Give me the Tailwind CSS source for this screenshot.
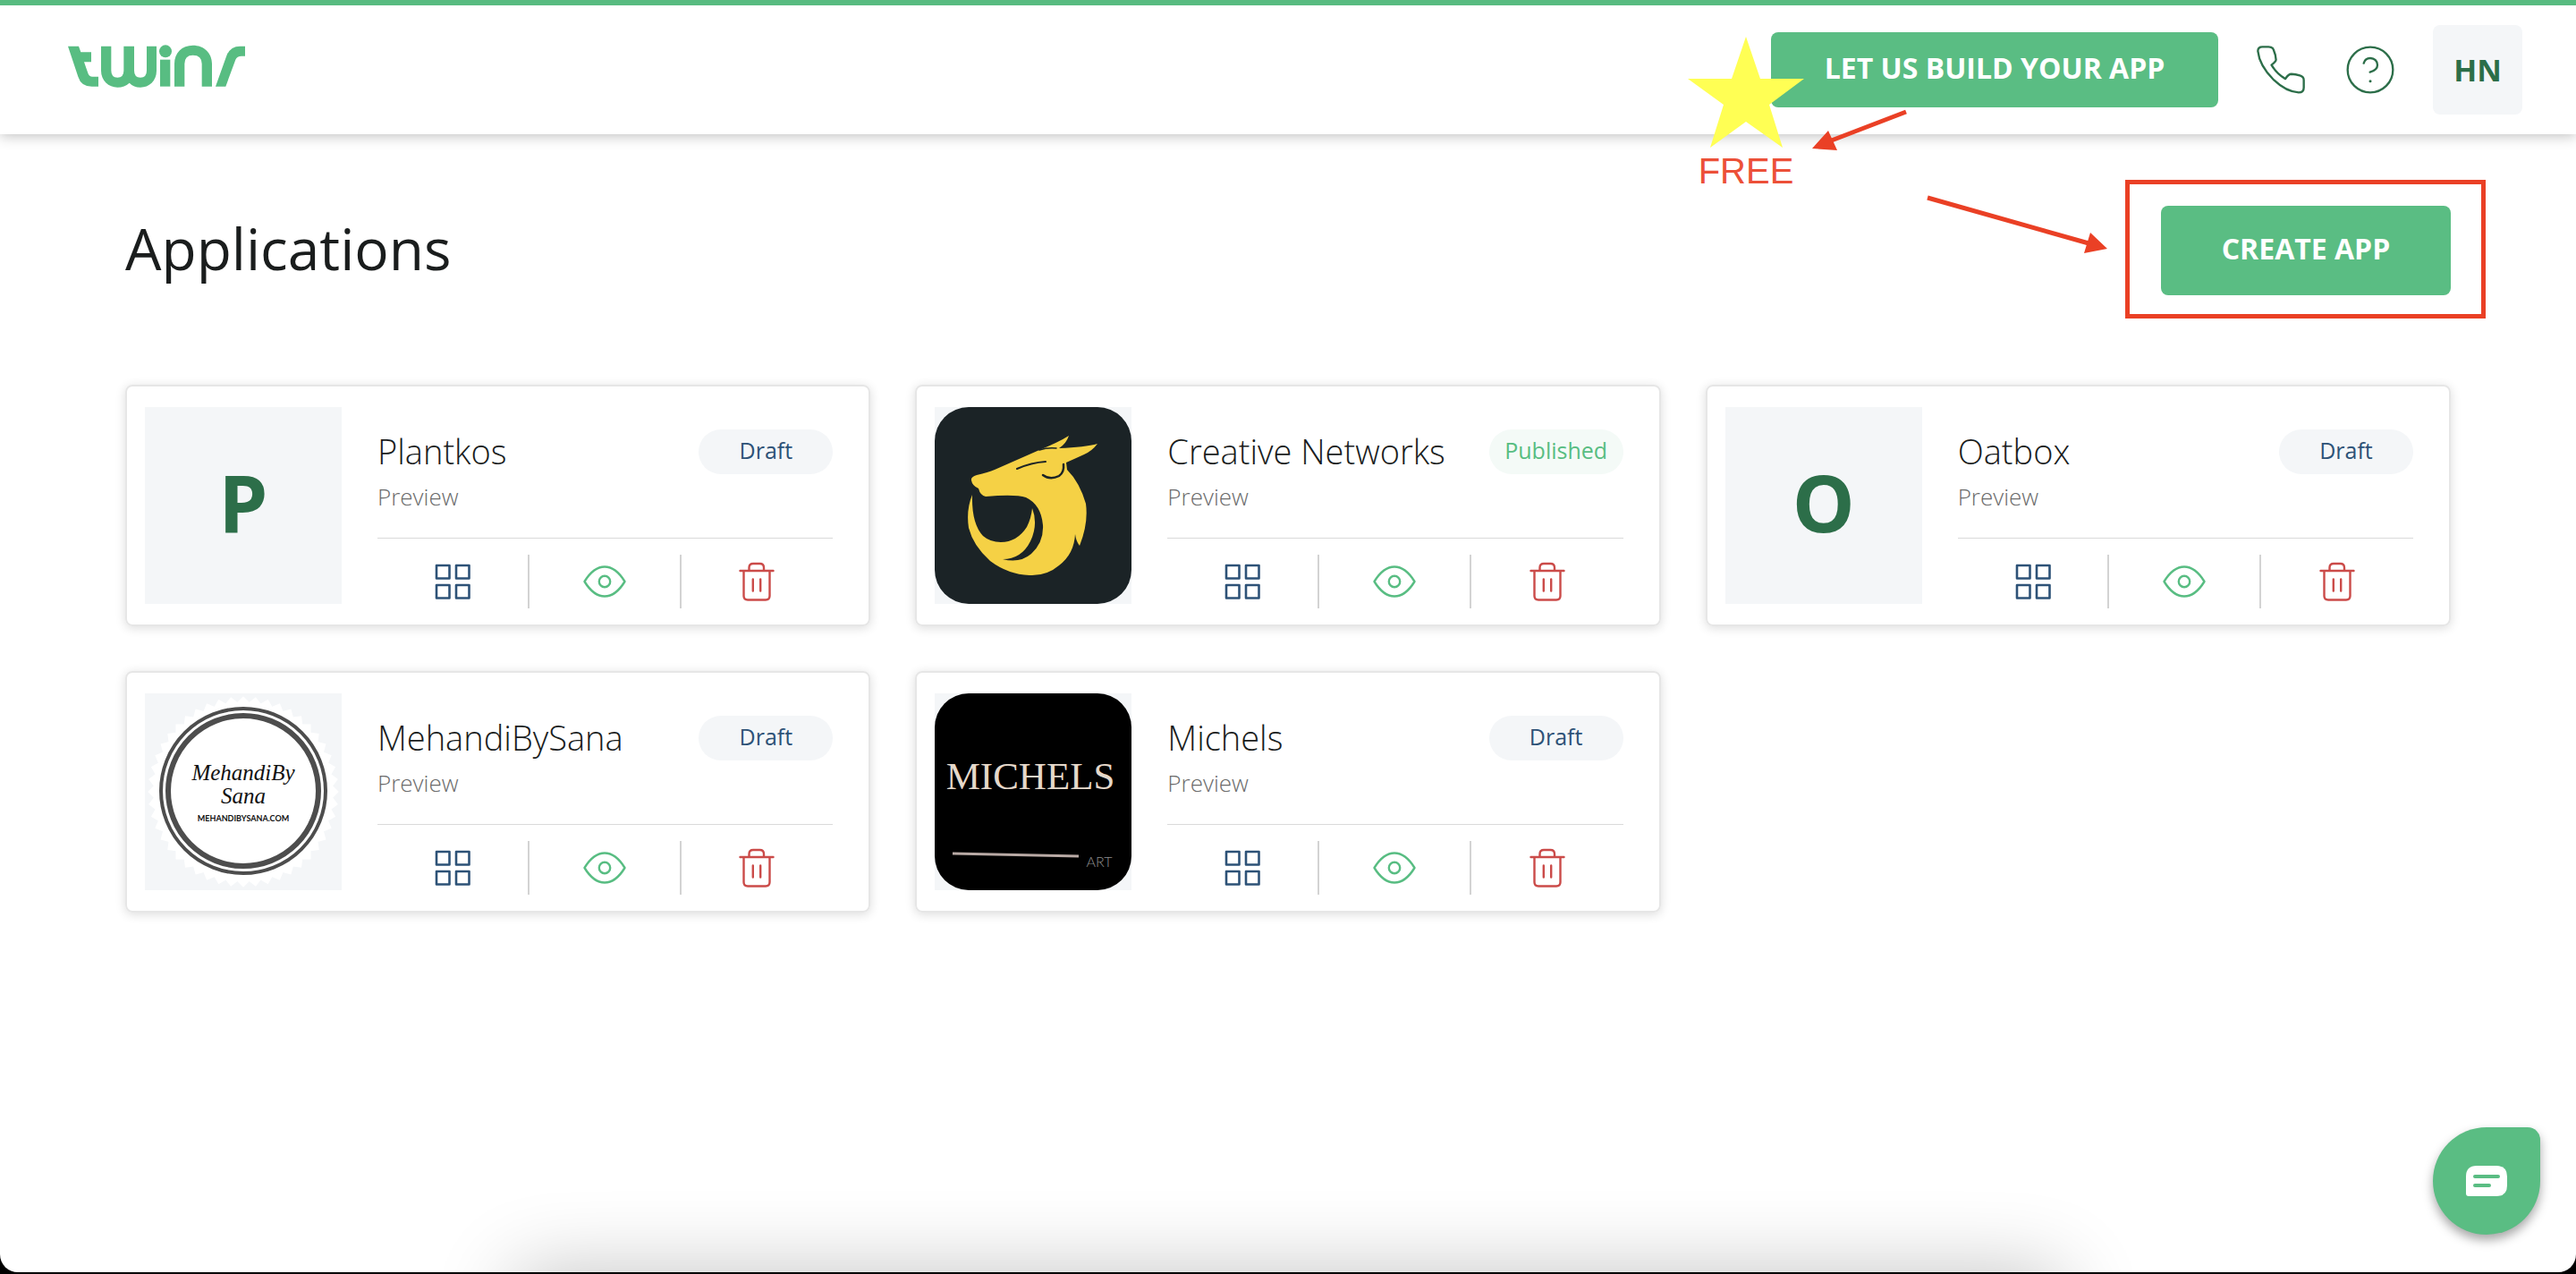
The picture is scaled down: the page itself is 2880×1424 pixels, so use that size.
<!DOCTYPE html>
<html lang="en">
<head>
<meta charset="utf-8">
<meta name="viewport" content="width=device-width, initial-scale=1">
<title>Applications</title>
<script src="https://cdn.jsdelivr.net/npm/@tailwindcss/browser@4"></script>
</head>
<body class="bg-black font-['Open_Sans',sans-serif] text-[#1a1d1d]">
<svg class="hidden" aria-hidden="true">
  <symbol id="grid" viewBox="0 0 50 50"><g fill="none" stroke="#2d5277" stroke-width="2.6" stroke-linejoin="round"><rect x="7" y="7" width="14.5" height="14.5"/><rect x="29" y="7" width="14.5" height="14.5"/><rect x="7" y="29" width="14.5" height="14.5"/><rect x="29" y="29" width="14.5" height="14.5"/></g></symbol>
  <symbol id="eye" viewBox="0 0 50 50"><g fill="none" stroke="#58bd82" stroke-width="2.4" stroke-linejoin="round"><path d="M2.5 25C8 16 16 8.500 25 8.500S42 16 47.500 25C42 34 34 41.500 25 41.500S8 34 2.500 25Z"/><circle cx="25" cy="25" r="6.200"/></g></symbol>
  <symbol id="trash" viewBox="0 0 50 50"><g fill="none" stroke="#cb4b49" stroke-width="2.4" stroke-linecap="round"><path d="M6.500 13H43.500M16.500 12.500V9.500Q16.500 5 21 5H28.500Q33 5 33 9.500V12.500M10.500 13V41Q10.500 45.500 15 45.500H35Q39.500 45.500 39.500 41V13M20.800 22.500V35.500M29.200 22.500V35.500"/></g></symbol>
</svg>

<div class="relative flex min-h-[calc(100vh-2px)] flex-col overflow-hidden rounded-b-[20px] bg-white">
  <header class="flex items-center justify-between border-t-6 border-[#58bb80] pr-[60px] pl-[76px] py-[22px] shadow-[0_2px_14px_rgba(0,0,0,0.25)]">
    <a href="#" aria-label="twinr">
      <svg class="h-[57px] w-[198px]" viewBox="48 28 594 171" fill="#58bd82">
        <path d="M48 33H84L91 53H126V86H102L115 123Q119 135 130 135H150V168H128Q92 168 82 135Z"/>
        <path d="M159 33H193V115Q193 138 214 138Q235 138 235 115V33H270V115Q270 138 291 138Q312 138 312 115V33H345V115C345 150 320 171 291 171Q268 171 254 156Q238 171 214 171C184 171 159 148 159 115Z"/>
        <circle cx="375" cy="50" r="21"/><path d="M357 78H391V168H357Z"/>
        <path d="M405 168V92C405 55 430 30 467 30S531 55 531 92V168H497V92Q497 63 467 63Q439 63 439 92V168Z"/>
        <path d="M543 168L580 65Q592 33 625 33H642V66H630Q615 66 610 78L577 168Z"/>
      </svg>
    </a>
    <div class="flex items-center gap-10">
      <button class="h-[84px] w-[500px] rounded-lg bg-[#5abd83] pb-1 text-[32px] font-bold text-white">LET US BUILD YOUR APP</button>
      <button class="flex size-[60px] items-center justify-center" aria-label="Call us">
        <svg class="size-[54px]" viewBox="71 94 160 160" fill="none" stroke="#2c6e49" stroke-width="7" stroke-linejoin="round"><path d="M75 112Q75 98 90 98H110Q124 98 127 108Q134 124 135 141Q135 147 120 158Q138 188 166 204Q176 188 186 188Q200 189 214 193Q227 197 227 208V233Q227 249 210 249Q170 248 128 208Q80 160 75 112Z"/></svg>
      </button>
      <button class="flex size-[60px] items-center justify-center" aria-label="Help">
        <svg class="size-[54px]" viewBox="369 93 162 162" fill="none" stroke="#2c6e49" stroke-width="7" stroke-linecap="round"><circle cx="450" cy="174" r="76"/><path d="M428 152C431 140 440 135 450 135C464 135 474 145 474 158C474 170 462 178 449 182"/><path d="M450 212V212.100" stroke-width="9"/></svg>
      </button>
      <button class="size-[100px] rounded-lg bg-[#f4f6f8] text-[34px] font-bold text-[#2c6e49]">HN</button>
    </div>
  </header>

  <main class="flex-1 px-[140px] pt-20 pb-20">
    <div class="flex items-center justify-between">
      <h1 class="pb-1 text-[64px] leading-[80px]">Applications</h1>
      <button class="h-[100px] w-[324px] rounded-lg bg-[#5abd83] pb-1 text-[32px] font-bold text-white">CREATE APP</button>
    </div>

    <section class="mt-[100px] grid grid-cols-1 gap-[50px] lg:grid-cols-2 xl:grid-cols-3">
      <article class="flex items-start gap-10 rounded-lg border-2 border-[#e6e6e6] pt-[23px] pr-10 pb-[18px] pl-5 shadow-[0_2px_12px_rgba(0,0,0,0.14)]">
        <div class="flex size-[220px] shrink-0 items-center justify-center bg-[#f4f6f8] pb-2 text-[88px] leading-none font-bold text-[#2c6e49]">P</div>
        <div class="min-w-0 flex-1 pt-[25px]">
          <div class="flex h-[50px] items-center justify-between"><h2 class="pb-0.5 text-[38px] font-light">Plantkos</h2><span class="flex h-[50px] w-[150px] items-center justify-center rounded-full bg-[#f4f6f8] pb-0.5 text-[25px] text-[#2d5277]">Draft</span></div>
          <a href="#" class="block h-[72px] border-b border-[#dadada] text-[26px] leading-[50px] font-light text-[#6b6b6b]">Preview</a>
          <div class="mt-[18px] grid h-[60px] grid-cols-3 divide-x-2 divide-[#d3d3d3]">
            <button class="flex items-center justify-center" aria-label="Dashboard"><svg class="size-[50px]"><use href="#grid"/></svg></button>
            <button class="flex items-center justify-center" aria-label="View"><svg class="size-[50px]"><use href="#eye"/></svg></button>
            <button class="flex items-center justify-center" aria-label="Delete"><svg class="size-[50px]"><use href="#trash"/></svg></button>
          </div>
        </div>
      </article>

      <article class="flex items-start gap-10 rounded-lg border-2 border-[#e6e6e6] pt-[23px] pr-10 pb-[18px] pl-5 shadow-[0_2px_12px_rgba(0,0,0,0.14)]">
        <div class="size-[220px] shrink-0 bg-[#f4f6f8]">
          <svg class="size-[220px]" viewBox="0 0 220 220" role="img" aria-label="Creative Networks logo">
            <rect width="220" height="220" rx="38" fill="#1b2326"/>
            <g fill="#f5d145">
              <path d="M41 82Q40 78 47 76Q60 73 67 70L117 48Q139 39 150 32Q147 41 139 46Q168 45 182 41Q176 49 167 53Q156 58 147 62L148 70Q162 84 169 108Q172 130 162 155Q158 150 157 142Q156 164 139 177Q125 189 106 188Q82 187 62 172Q43 155 38 135Q35 115 42 98Q41 130 54 144Q62 151 74 151Q92 151 103 134Q108 124 109 113Q116 131 107 150Q97 170 76 170Q95 175 108 164Q122 151 121 132Q119 109 102 101Q90 97 57 100Q51 99 49 91Q42 88 41 82Z"/>
            </g>
            <g fill="none" stroke="#1b2326" stroke-linecap="round"><path d="M92 69Q108 62 124 61" stroke-width="2"/><path d="M121 76Q129 82 139 77Q145 73 144 64" stroke-width="2.5"/><path d="M117 48Q126 45 136 46" stroke-width="1.5"/></g>
          </svg>
        </div>
        <div class="min-w-0 flex-1 pt-[25px]">
          <div class="flex h-[50px] items-center justify-between"><h2 class="pb-0.5 text-[38px] font-light">Creative Networks</h2><span class="flex h-[50px] w-[150px] items-center justify-center rounded-full bg-[#f4faf7] pb-0.5 text-[25px] text-[#58bd82]">Published</span></div>
          <a href="#" class="block h-[72px] border-b border-[#dadada] text-[26px] leading-[50px] font-light text-[#6b6b6b]">Preview</a>
          <div class="mt-[18px] grid h-[60px] grid-cols-3 divide-x-2 divide-[#d3d3d3]">
            <button class="flex items-center justify-center" aria-label="Dashboard"><svg class="size-[50px]"><use href="#grid"/></svg></button>
            <button class="flex items-center justify-center" aria-label="View"><svg class="size-[50px]"><use href="#eye"/></svg></button>
            <button class="flex items-center justify-center" aria-label="Delete"><svg class="size-[50px]"><use href="#trash"/></svg></button>
          </div>
        </div>
      </article>

      <article class="flex items-start gap-10 rounded-lg border-2 border-[#e6e6e6] pt-[23px] pr-10 pb-[18px] pl-5 shadow-[0_2px_12px_rgba(0,0,0,0.14)]">
        <div class="flex size-[220px] shrink-0 items-center justify-center bg-[#f4f6f8] pb-2 text-[88px] leading-none font-bold text-[#2c6e49]">O</div>
        <div class="min-w-0 flex-1 pt-[25px]">
          <div class="flex h-[50px] items-center justify-between"><h2 class="pb-0.5 text-[38px] font-light">Oatbox</h2><span class="flex h-[50px] w-[150px] items-center justify-center rounded-full bg-[#f4f6f8] pb-0.5 text-[25px] text-[#2d5277]">Draft</span></div>
          <a href="#" class="block h-[72px] border-b border-[#dadada] text-[26px] leading-[50px] font-light text-[#6b6b6b]">Preview</a>
          <div class="mt-[18px] grid h-[60px] grid-cols-3 divide-x-2 divide-[#d3d3d3]">
            <button class="flex items-center justify-center" aria-label="Dashboard"><svg class="size-[50px]"><use href="#grid"/></svg></button>
            <button class="flex items-center justify-center" aria-label="View"><svg class="size-[50px]"><use href="#eye"/></svg></button>
            <button class="flex items-center justify-center" aria-label="Delete"><svg class="size-[50px]"><use href="#trash"/></svg></button>
          </div>
        </div>
      </article>

      <article class="flex items-start gap-10 rounded-lg border-2 border-[#e6e6e6] pt-[23px] pr-10 pb-[18px] pl-5 shadow-[0_2px_12px_rgba(0,0,0,0.14)]">
        <div class="size-[220px] shrink-0 bg-[#f4f6f8]">
          <svg class="size-[220px]" viewBox="-110 -110 220 220">
            <defs><rect id="sq" x="-75.500" y="-75.500" width="151" height="151" fill="#fff"/></defs>
            <use href="#sq" transform="rotate(45)"/><use href="#sq" transform="rotate(52.500)"/><use href="#sq" transform="rotate(60)"/><use href="#sq" transform="rotate(67.500)"/><use href="#sq" transform="rotate(75)"/><use href="#sq" transform="rotate(82.500)"/><use href="#sq"/><use href="#sq" transform="rotate(7.500)"/><use href="#sq" transform="rotate(15)"/><use href="#sq" transform="rotate(22.500)"/><use href="#sq" transform="rotate(30)"/><use href="#sq" transform="rotate(37.500)"/>
            <g fill="none" stroke="#4d4d4d"><circle cy="-1" r="92" stroke-width="4"/><circle cy="-1" r="84" stroke-width="6"/></g>
            <g text-anchor="middle" fill="#111">
              <text class="font-['Liberation_Serif',serif] text-[25px] italic" y="-13">MehandiBy</text>
              <text class="font-['Liberation_Serif',serif] text-[25px] italic" y="13">Sana</text>
              <text class="font-['Lato',sans-serif] text-[9px] font-bold" y="33">MEHANDIBYSANA.COM</text>
            </g>
          </svg>
        </div>
        <div class="min-w-0 flex-1 pt-[25px]">
          <div class="flex h-[50px] items-center justify-between"><h2 class="pb-0.5 text-[38px] font-light">MehandiBySana</h2><span class="flex h-[50px] w-[150px] items-center justify-center rounded-full bg-[#f4f6f8] pb-0.5 text-[25px] text-[#2d5277]">Draft</span></div>
          <a href="#" class="block h-[72px] border-b border-[#dadada] text-[26px] leading-[50px] font-light text-[#6b6b6b]">Preview</a>
          <div class="mt-[18px] grid h-[60px] grid-cols-3 divide-x-2 divide-[#d3d3d3]">
            <button class="flex items-center justify-center" aria-label="Dashboard"><svg class="size-[50px]"><use href="#grid"/></svg></button>
            <button class="flex items-center justify-center" aria-label="View"><svg class="size-[50px]"><use href="#eye"/></svg></button>
            <button class="flex items-center justify-center" aria-label="Delete"><svg class="size-[50px]"><use href="#trash"/></svg></button>
          </div>
        </div>
      </article>

      <article class="flex items-start gap-10 rounded-lg border-2 border-[#e6e6e6] pt-[23px] pr-10 pb-[18px] pl-5 shadow-[0_2px_12px_rgba(0,0,0,0.14)]">
        <div class="size-[220px] shrink-0 bg-[#f4f6f8]">
          <svg class="size-[220px]" viewBox="0 0 220 220">
            <rect width="220" height="220" rx="38" fill="#000"/>
            <text class="font-['Liberation_Serif',serif] text-[43px]" x="107" y="107" text-anchor="middle" fill="#e5d8ca">MICHELS</text>
            <path d="M20 179L161 182" stroke="#b9aaa5" stroke-width="3"/>
            <text class="font-['Lato',sans-serif] text-base font-light" x="184" y="194" text-anchor="middle" fill="#8d8d8d">ART</text>
          </svg>
        </div>
        <div class="min-w-0 flex-1 pt-[25px]">
          <div class="flex h-[50px] items-center justify-between"><h2 class="pb-0.5 text-[38px] font-light">Michels</h2><span class="flex h-[50px] w-[150px] items-center justify-center rounded-full bg-[#f4f6f8] pb-0.5 text-[25px] text-[#2d5277]">Draft</span></div>
          <a href="#" class="block h-[72px] border-b border-[#dadada] text-[26px] leading-[50px] font-light text-[#6b6b6b]">Preview</a>
          <div class="mt-[18px] grid h-[60px] grid-cols-3 divide-x-2 divide-[#d3d3d3]">
            <button class="flex items-center justify-center" aria-label="Dashboard"><svg class="size-[50px]"><use href="#grid"/></svg></button>
            <button class="flex items-center justify-center" aria-label="View"><svg class="size-[50px]"><use href="#eye"/></svg></button>
            <button class="flex items-center justify-center" aria-label="Delete"><svg class="size-[50px]"><use href="#trash"/></svg></button>
          </div>
        </div>
      </article>
    </section>
  </main>

  <!-- soft shade rising from the bottom edge -->
  <div class="pointer-events-none absolute inset-x-[20%] top-full h-40 shadow-[0_0_90px_rgba(0,0,0,0.24)]"></div>

  <!-- callouts -->
  <svg class="pointer-events-none absolute top-0 right-0 h-[380px] w-[1040px]" viewBox="1840 0 1040 380">
    <path fill="#ffff54" d="M1952 41L1968 88H2017L1978 117L1993 165L1952 136L1912 165L1927 117L1887 88H1936Z"/>
    <g fill="none" stroke="#ea4025" stroke-width="5"><path d="M2131 125L2045 158M2155 221L2337 272.500"/><rect x="2378.500" y="203.500" width="398" height="150"/></g>
    <path fill="#ea4025" d="M2026 166L2044 146L2054 168ZM2356 278L2337 260L2330 283Z"/>
    <text class="font-['Liberation_Sans',sans-serif] text-[40px]" x="1952" y="205" text-anchor="middle" fill="#ec5038">FREE</text>
  </svg>

  <button class="absolute right-10 bottom-[42px] flex size-[120px] items-center justify-center rounded-[60px] rounded-tr-[14px] bg-[#5abd83] shadow-[0_6px_12px_rgba(0,0,0,0.35)]" aria-label="Open chat">
    <svg class="h-[34px] w-[46px]" viewBox="0 0 46 34"><path fill="#fff" d="M12 0H34Q46 0 46 12V22Q46 34 34 34H3Q0 34 0 31V12Q0 0 12 0Z"/><path d="M10 12H36M10 22H26" stroke="#5abd83" stroke-width="4" stroke-linecap="round"/></svg>
  </button>
</div>
</body>
</html>
